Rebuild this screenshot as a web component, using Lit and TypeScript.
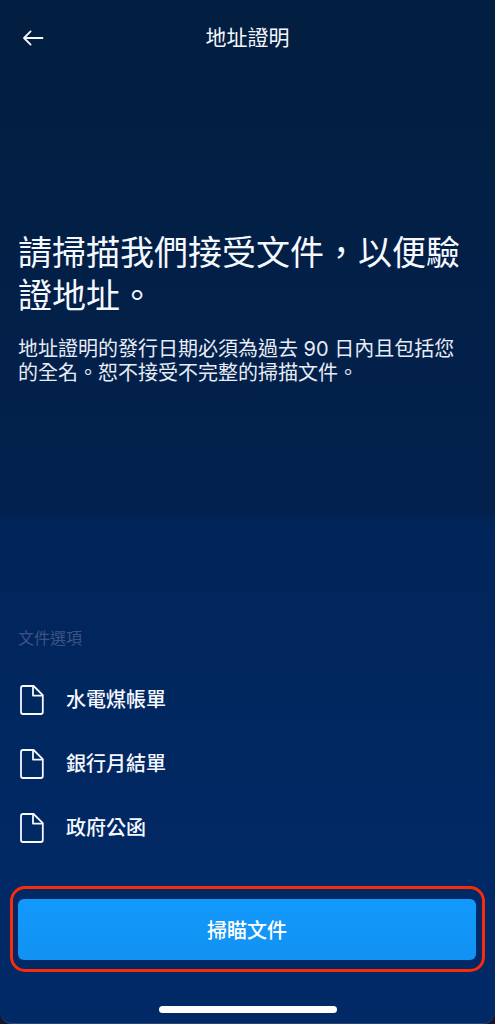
import { LitElement, html, css, svg } from "lit";
import { customElement, property } from "lit/decorators.js";

const documentIcon = svg`
  <path d="M5 2H15.6L24.8 11.2V28Q24.8 30 22.8 30H5Q3 30 3 28V4Q3 2 5 2Z"
    fill="none" stroke="currentColor" stroke-width="1.8" stroke-linejoin="round" />
  <path d="M15 2.4V11.6H24.4" fill="none" stroke="currentColor" stroke-width="1.8" stroke-linejoin="round" />
`;

@customElement("document-option")
export class DocumentOption extends LitElement {
  @property() label = "";

  static styles = css`
    :host {
      display: flex;
      align-items: center;
      gap: 20px;
      height: 64px;
      font-size: 20px;
      font-weight: 500;
      line-height: 28px;
    }
    .icon {
      width: 28px;
      height: 32px;
      flex: none;
    }
  `;

  render() {
    return html`
      <svg class="icon" viewBox="0 0 28 32" aria-hidden="true">${documentIcon}</svg>
      <span>${this.label}</span>
    `;
  }
}

@customElement("app-root")
export class AppRoot extends LitElement {
  private options = ["水電煤帳單", "銀行月結單", "政府公函"];

  static styles = css`
    :host {
      display: block;
      background: #12162f;
      color: #f6f8ff;
      font-family: Inter, "Noto Sans CJK TC", sans-serif;
    }
    .screen {
      box-sizing: border-box;
      display: flex;
      flex-direction: column;
      min-height: 100vh;
      padding: 16px 18px 10px;
      border-bottom: 1px solid #2b4678;
      border-radius: 0 0 12px 12px;
      background: linear-gradient(#021e40 0%, #02214d 50%, #01255a 51%, #012965 88%, #012965 100%);
    }
    .bar {
      display: grid;
      grid-template-columns: 44px 1fr 44px;
      align-items: center;
      height: 44px;
    }
    .back {
      display: grid;
      place-items: center start;
      height: 44px;
      padding: 0 4px;
      border: 0;
      background: none;
      color: inherit;
    }
    .title {
      margin: 0;
      font-size: 21px;
      font-weight: 400;
      line-height: 28px;
      text-align: center;
    }
    .intro {
      margin-top: 171px;
      padding-right: 16px;
    }
    .heading {
      margin: 0;
      font-size: 34px;
      font-weight: 400;
      line-height: 43px;
    }
    .text {
      margin: 20px 0 0;
      font-size: 20px;
      line-height: 24px;
      color: #e8ecf6;
    }
    .documents {
      margin-top: auto;
    }
    .caption {
      margin: 0 0 18px;
      font-size: 16px;
      font-weight: 400;
      line-height: 24px;
      color: #3d5284;
    }
    .list {
      margin: 0;
      padding: 0;
      list-style: none;
    }
    .action {
      margin: 26px -8px 34px;
      padding: 10px 6px 9px 5px;
      border: 3px solid #f92b0a;
      border-radius: 15px;
    }
    .scan {
      display: block;
      width: 100%;
      height: 61px;
      border: 0;
      border-radius: 6px;
      background: linear-gradient(#1299fc, #1292f2);
      color: #fff;
      font: inherit;
      font-size: 20px;
      font-weight: 500;
    }
    .home {
      align-self: center;
      width: 178px;
      height: 7px;
      border-radius: 4px;
      background: #fff;
    }
  `;

  render() {
    return html`
      <main class="screen">
        <header class="bar">
          <button class="back" type="button" aria-label="返回">
            <svg width="22" height="18" viewBox="0 0 22 18" fill="none" stroke="currentColor"
              stroke-width="1.8" stroke-linecap="round" stroke-linejoin="round" aria-hidden="true">
              <path d="M20.5 9H2M8.6 2.4L2 9L8.6 15.6" />
            </svg>
          </button>
          <h1 class="title">地址證明</h1>
        </header>
        <section class="intro">
          <h2 class="heading">請掃描我們接受文件，以便驗證地址。</h2>
          <p class="text">地址證明的發行日期必須為過去 90 日內且包括您的全名。恕不接受不完整的掃描文件。</p>
        </section>
        <section class="documents">
          <h3 class="caption">文件選項</h3>
          <ul class="list">
            ${this.options.map((o) => html`<li><document-option label=${o}></document-option></li>`)}
          </ul>
        </section>
        <div class="action">
          <button class="scan" type="button">掃瞄文件</button>
        </div>
        <div class="home"></div>
      </main>
    `;
  }
}
